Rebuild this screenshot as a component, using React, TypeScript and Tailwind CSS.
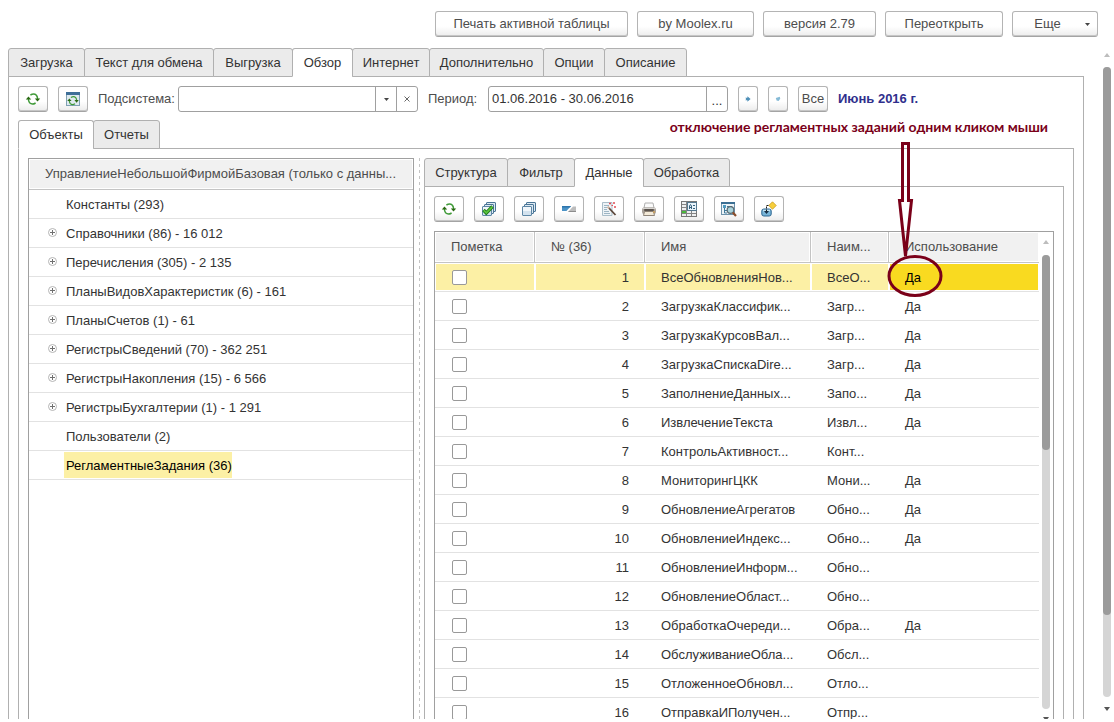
import type { ReactNode } from "react";

const BTN =
  "flex h-[26px] shrink-0 items-center justify-center rounded-[3px] border border-[#b4b4b4] border-b-[#a4a4a4] bg-linear-to-b from-white from-60% to-[#ececec] text-[#4d4d4d] shadow-[inset_0_-1px_0_#c6c6c6]";

type Tab = { label: string; width: string; active?: boolean };

const mainTabs: Tab[] = [
  { label: "Загрузка", width: "w-[77px]" },
  { label: "Текст для обмена", width: "w-[130px]" },
  { label: "Выгрузка", width: "w-20" },
  { label: "Обзор", width: "w-[61px]", active: true },
  { label: "Интернет", width: "w-[78px]" },
  { label: "Дополнительно", width: "w-[115px]" },
  { label: "Опции", width: "w-[62px]" },
  { label: "Описание", width: "w-[83px]" },
];

const objectTabs: Tab[] = [
  { label: "Объекты", width: "w-[76px]", active: true },
  { label: "Отчеты", width: "w-[67px]" },
];

const dataTabs: Tab[] = [
  { label: "Структура", width: "w-[84px]" },
  { label: "Фильтр", width: "w-[68px]" },
  { label: "Данные", width: "w-[70px]", active: true },
  { label: "Обработка", width: "w-[87px]" },
];

function Tabs({ tabs }: { tabs: Tab[] }) {
  return (
    <div role="tablist" className="relative z-10 -mb-px flex shrink-0">
      {tabs.map((t, i) => (
        <button
          key={t.label}
          role="tab"
          aria-selected={!!t.active}
          className={`${t.width} ${i > 0 ? "-ml-px" : ""} ${
            t.active ? "border-b-white bg-white" : "bg-[#ebebeb]"
          } h-[29px] shrink-0 rounded-t-[3px] border border-[#b0b0b0] text-center whitespace-nowrap text-[#333]`}
        >
          {t.label}
        </button>
      ))}
    </div>
  );
}

function Svg({ children }: { children: ReactNode }) {
  return (
    <svg width="16" height="16" viewBox="0 0 16 16" fill="none" aria-hidden="true">
      {children}
    </svg>
  );
}

function RefreshShape() {
  return (
    <>
      <path d="M5.4 4Q9 1.8 11.4 4.2Q12.5 5.6 12.6 8" stroke="#3f9a38" strokeWidth="1.5" />
      <path d="M10.6 12Q7 14.2 4.6 11.8Q3.5 10.4 3.4 8" stroke="#3f9a38" strokeWidth="1.5" />
      <path d="M9.8 7.4H15.2L12.5 10.6Z" fill="#2a6a12" />
      <path d="M0.8 8.6H6.2L3.5 5.4Z" fill="#2a6a12" />
    </>
  );
}

const RefreshIcon = () => (
  <Svg>
    <RefreshShape />
  </Svg>
);

const WindowRefreshIcon = () => (
  <Svg>
    <rect x="1.5" y="1.5" width="13" height="13" fill="#dfeaf0" stroke="#7fa0b3" />
    <rect x="1" y="1" width="14" height="3" fill="#3f6f98" />
    <g transform="translate(1.6 3.2) scale(0.8)">
      <RefreshShape />
    </g>
  </Svg>
);

const Sheets = () => (
  <>
    <rect x="5.5" y="1.5" width="9" height="9" rx="0.5" fill="#dce9f2" stroke="#4a7596" />
    <rect x="3.5" y="3.5" width="9" height="9" rx="0.5" fill="#dce9f2" stroke="#4a7596" />
    <rect x="1.5" y="5.5" width="9" height="9" rx="0.5" fill="#f1f6fa" stroke="#5d86a5" />
    <path d="M2 10H10V14H2Z" fill="#d3e2ee" />
  </>
);

const CheckAllIcon = () => (
  <Svg>
    <Sheets />
    <path d="M2.5 9L5.3 12L11.5 5.5" stroke="#1f7a1a" strokeWidth="3.4" />
    <path d="M2.8 9.3L5.3 11.8L11.2 5.9" stroke="#5cc43c" strokeWidth="1.8" />
  </Svg>
);

const UncheckAllIcon = () => (
  <Svg>
    <Sheets />
  </Svg>
);

const InvertIcon = () => (
  <Svg>
    <path d="M1 5H10L5.5 10H1Z" fill="#4b93c6" />
    <path d="M1 5H10L9 6.5H1Z" fill="#2f76ad" />
    <path d="M12 5.5H15V11H7Z" fill="#bdbdbd" />
    <path d="M7 11H15V10H8.2Z" fill="#8d8d8d" />
  </Svg>
);

const WandIcon = () => (
  <Svg>
    <path d="M1.5 1.5H11V14.5H1.5Z" fill="#eef3f6" stroke="#a9bdc9" />
    <path d="M3 4.5H8M3 6.5H6M3 8.5H6M3 10.5H8M3 12.5H9" stroke="#9db5c4" />
    <path d="M7 6L14.5 14" stroke="#5b463a" strokeWidth="1.8" />
    <path d="M6.6 5.6L8.3 7.4" stroke="#d8b9a5" strokeWidth="1.8" />
    <path d="M9 1.5V3.5M8 2.5H10M13 1V3M12 2H14M14 5V7M13 6H15M10.5 4.5H12" stroke="#e14d55" />
  </Svg>
);

const PrintIcon = () => (
  <Svg>
    <path d="M4 2H12L13 7H3Z" fill="#fbfbfb" stroke="#b0b0b0" />
    <rect x="1" y="6.5" width="14" height="6.5" rx="2" fill="#aaa39c" />
    <path d="M1.5 7.5H14.5" stroke="#d9d6d2" />
    <rect x="3" y="8" width="10" height="2" rx="1" fill="#5a534d" />
    <path d="M3.5 10.5H12.5L13.5 14.5H2.5Z" fill="#f3ead8" stroke="#8f8478" />
    <rect x="12" y="10.5" width="2" height="1" fill="#e3a23a" />
  </Svg>
);

const GridCardIcon = () => (
  <Svg>
    <rect x="0.5" y="0.5" width="15" height="15" fill="#eef0f1" stroke="#777" />
    <path d="M1 3.5H15M1 6.5H15M1 9.5H15M1 12.5H15M5.5 1V15M10.5 1V15" stroke="#858585" />
    <rect x="1" y="10" width="4" height="2" fill="#48b93b" />
    <rect x="6.5" y="1.5" width="9" height="8" fill="#e8f3fa" stroke="#55788f" />
    <path d="M8.5 8V5L9.5 3.5L10.5 5V8M8.5 6.5H10.5M12 4.5H14M12 7.5H14" stroke="#35617f" />
  </Svg>
);

const InspectIcon = () => (
  <Svg>
    <rect x="0.5" y="1.5" width="13" height="12" fill="#edf4f8" stroke="#6e93ab" />
    <path d="M0 2H14" stroke="#3c6f93" strokeWidth="2" />
    <rect x="2" y="4" width="3" height="3" fill="#4f9bc0" />
    <path d="M3.5 7V12M3.5 9.5H6M3.5 12H6M6 5.5H11" stroke="#3f7899" />
    <circle cx="9.5" cy="9" r="3.3" fill="#a8d3dc" stroke="#5a6a72" strokeWidth="1.2" />
    <path d="M11.8 11.5L15 15" stroke="#8a4e2c" strokeWidth="2.2" />
  </Svg>
);

const ExportIcon = () => (
  <Svg>
    <path d="M11.5 0.8L15.2 4.5L11.5 8.2L7.8 4.5Z" fill="#f7cf3c" stroke="#c79a1c" strokeWidth="0.8" />
    <rect x="0.8" y="8" width="9.4" height="7" rx="2" fill="#79b5d8" stroke="#2b6590" />
    <path d="M2 9.5H9" stroke="#c4e2f1" strokeWidth="1.5" />
    <path d="M7.5 4.5H5.5V11" stroke="#1d1d1d" strokeDasharray="2 1" />
    <path d="M3 10H8L5.5 13Z" fill="#172f45" />
  </Svg>
);

const StepIcon = ({ forward }: { forward?: boolean }) => (
  <svg width="6" height="6" viewBox="0 0 6 6" aria-hidden="true">
    {forward ? (
      <path d="M0.3 1.8H2.4V0.2L5.6 3L2.4 5.8V4.2H0.3L1.2 3Z" fill="#4f90b8" />
    ) : (
      <path d="M0.8 2L4.8 0.8L5.2 2.8L3.6 5L1.6 4.6Z" fill="#85bad6" />
    )}
  </svg>
);

const Down = () => (
  <svg width="5" height="3" viewBox="0 0 5 3" aria-hidden="true">
    <path d="M0 0H5L2.5 3Z" fill="#444" />
  </svg>
);

function ArrowHead({ up }: { up?: boolean }) {
  return (
    <svg width="6" height="4" viewBox="0 0 6 4" className="shrink-0" aria-hidden="true">
      {up ? <path d="M0 4L3 0L6 4Z" fill="#bdbdbd" /> : <path d="M0 0H6L3 4Z" fill="#555" />}
    </svg>
  );
}

const tree = [
  { label: "Константы (293)" },
  { label: "Справочники (86) - 16 012", plus: true },
  { label: "Перечисления (305) - 2 135", plus: true },
  { label: "ПланыВидовХарактеристик (6) - 161", plus: true },
  { label: "ПланыСчетов (1) - 61", plus: true },
  { label: "РегистрыСведений (70) - 362 251", plus: true },
  { label: "РегистрыНакопления (15) - 6 566", plus: true },
  { label: "РегистрыБухгалтерии (1) - 1 291", plus: true },
  { label: "Пользователи (2)" },
  { label: "РегламентныеЗадания (36)", selected: true },
];

const rows: [string, string, boolean][] = [
  ["ВсеОбновленияНов...", "ВсеО...", true],
  ["ЗагрузкаКлассифик...", "Загр...", true],
  ["ЗагрузкаКурсовВал...", "Загр...", true],
  ["ЗагрузкаСпискаDire...", "Загр...", true],
  ["ЗаполнениеДанных...", "Запо...", true],
  ["ИзвлечениеТекста", "Извл...", true],
  ["КонтрольАктивност...", "Конт...", false],
  ["МониторингЦКК", "Мони...", true],
  ["ОбновлениеАгрегатов", "Обно...", true],
  ["ОбновлениеИндекс...", "Обно...", true],
  ["ОбновлениеИнформ...", "Обно...", false],
  ["ОбновлениеОбласт...", "Обно...", false],
  ["ОбработкаОчереди...", "Обра...", true],
  ["ОбслуживаниеОбла...", "Обсл...", false],
  ["ОтложенноеОбновл...", "Отло...", false],
  ["ОтправкаИПолучен...", "Отпр...", false],
];

const tools: [string, () => ReactNode][] = [
  ["Обновить", RefreshIcon],
  ["Пометить все", CheckAllIcon],
  ["Снять пометки", UncheckAllIcon],
  ["Инвертировать", InvertIcon],
  ["Мастер", WandIcon],
  ["Печать", PrintIcon],
  ["Карточка", GridCardIcon],
  ["Найти", InspectIcon],
  ["Выгрузить", ExportIcon],
];

function ObjectTree() {
  return (
    <div className="w-[386px] shrink-0 overflow-hidden border border-b-0 border-[#a0a0a0]">
      <div className="h-[31px] truncate border-b border-[#c4c4c4] bg-[#f1f1f1] pl-4 leading-[30px] text-[#4d4d4d] shadow-[inset_0_0_0_1px_#fff]">
        УправлениеНебольшойФирмойБазовая (только с данны...
      </div>
      <ul role="tree">
        {tree.map((n) => (
          <li
            key={n.label}
            role="treeitem"
            aria-selected={!!n.selected}
            className="flex h-[29px] items-center border-b border-[#e2e2e2]"
          >
            <span className="flex w-[35px] shrink-0 justify-end pr-[7px] pb-px">
              {n.plus && (
                <svg width="9" height="9" viewBox="0 0 9 9" fill="none" aria-hidden="true">
                  <circle cx="4.5" cy="4.5" r="4" stroke="#b5b5b5" />
                  <path d="M2 4.5H7M4.5 2V7" stroke="#707070" />
                </svg>
              )}
            </span>
            <span
              className={`h-[26px] pl-0.5 leading-7 ${n.selected ? "bg-[#fcf0a5] text-black" : ""}`}
            >
              {n.label}
            </span>
          </li>
        ))}
      </ul>
    </div>
  );
}

const TH =
  "border-r border-[#c4c4c4] pl-4 text-left font-normal text-[#4d4d4d] shadow-[inset_0_0_0_1px_#fff] last:border-r-0";

function JobsTable() {
  return (
    <div className="mt-[9px] flex min-h-0 flex-1 overflow-hidden border border-b-0 border-[#a0a0a0]">
      <div className="min-w-0 flex-1 overflow-hidden">
        <table className="w-full table-fixed border-separate border-spacing-0">
          <colgroup>
            <col className="w-[100px]" />
            <col className="w-[110px]" />
            <col className="w-[166px]" />
            <col className="w-[78px]" />
            <col />
          </colgroup>
          <thead>
            <tr className="h-[31px] bg-[#f1f1f1] *:border-b">
              <th className={TH}>Пометка</th>
              <th className={TH}>№ (36)</th>
              <th className={TH}>Имя</th>
              <th className={TH}>Наим...</th>
              <th className={TH}>Использование</th>
            </tr>
          </thead>
          <tbody>
            {rows.map(([name, title, used], i) => (
              <tr
                key={name}
                className={`h-[29px] *:border-b *:border-[#e2e2e2] ${
                  i === 0 ? "bg-[#fcf0a5] *:shadow-[inset_0_0_0_1px_#fff]" : ""
                }`}
              >
                <td className="pl-[17px]">
                  <input
                    type="checkbox"
                    aria-label={name}
                    className="block size-[15px] appearance-none rounded-[2px] border border-[#999] bg-white"
                  />
                </td>
                <td className="pt-0.5 pr-4 text-right">{i + 1}</td>
                <td className="pt-0.5 pl-4 whitespace-nowrap">{name}</td>
                <td className="pt-0.5 pl-4 whitespace-nowrap">{title}</td>
                <td className={`pt-0.5 pl-4 ${i === 0 ? "bg-[#f9da20] text-black" : ""}`}>
                  {used ? "Да" : ""}
                </td>
              </tr>
            ))}
          </tbody>
        </table>
      </div>
      <div className="flex w-3.5 shrink-0 flex-col items-center pt-2">
        <ArrowHead up />
        <div className="mt-[11px] min-h-0 w-2 flex-1 rounded-full bg-[#d5d5d5]">
          <div className="h-[43%] rounded-full bg-[#9b9b9b]" />
        </div>
        <div className="mt-2 h-0.5 overflow-hidden">
          <ArrowHead />
        </div>
      </div>
    </div>
  );
}

export default function App() {
  return (
    <div className="relative flex h-screen flex-col overflow-hidden bg-white pt-[11px] pb-[3px] font-['Liberation_Sans',Arial,sans-serif] text-[13px] leading-4 text-[#333]">
      <div className="flex shrink-0 justify-end gap-[9px] pr-4">
        <button className={`${BTN} w-[193px]`}>Печать активной таблицы</button>
        <button className={`${BTN} w-[117px]`}>by Moolex.ru</button>
        <button className={`${BTN} w-[113px]`}>версия 2.79</button>
        <button className={`${BTN} w-[118px]`}>Переоткрыть</button>
        <button className={`${BTN} w-[86px] gap-6 pl-3.5`}>
          Еще
          <Down />
        </button>
      </div>

      <div className="mt-[11px] flex min-h-0 flex-1 pl-2">
        <div className="flex min-w-0 flex-1 flex-col">
          <Tabs tabs={mainTabs} />
          <div className="flex min-h-0 flex-1 flex-col border border-b-0 border-[#b0b0b0] px-[9px] pt-[9px]">
            <div className="flex shrink-0 items-center">
              <button aria-label="Обновить" className={`${BTN} w-[30px]`}>
                <RefreshIcon />
              </button>
              <button aria-label="Обновить форму" className={`${BTN} ml-2.5 w-[30px]`}>
                <WindowRefreshIcon />
              </button>
              <label htmlFor="subsystem" className="ml-2.5 w-20 text-[#4d4d4d]">
                Подсистема:
              </label>
              <div className="flex h-[26px] w-60 rounded-[3px] border border-[#a0a0a0]">
                <input id="subsystem" className="min-w-0 flex-1 px-1 outline-none" />
                <button
                  aria-label="Выбрать"
                  className="flex w-[21px] items-center justify-center border-l border-[#a0a0a0]"
                >
                  <Down />
                </button>
                <button
                  aria-label="Очистить"
                  className="flex w-[21px] items-center justify-center border-l border-[#a0a0a0]"
                >
                  <svg width="6" height="6" viewBox="0 0 6 6" aria-hidden="true">
                    <path d="M0.5 0.5L5.5 5.5M5.5 0.5L0.5 5.5" stroke="#555" strokeWidth="0.9" />
                  </svg>
                </button>
              </div>
              <label htmlFor="period" className="ml-2.5 w-[60px] text-[#4d4d4d]">
                Период:
              </label>
              <div className="flex h-[26px] w-60 rounded-[3px] border border-[#a0a0a0]">
                <input
                  id="period"
                  defaultValue="01.06.2016 - 30.06.2016"
                  className="min-w-0 flex-1 px-[3px] outline-none"
                />
                <button
                  aria-label="Выбрать период"
                  className="w-[21px] border-l border-[#a0a0a0] pt-1"
                >
                  ...
                </button>
              </div>
              <button aria-label="Предыдущий период" className={`${BTN} ml-2.5 w-5`}>
                <StepIcon forward />
              </button>
              <button aria-label="Следующий период" className={`${BTN} ml-2.5 w-5`}>
                <StepIcon />
              </button>
              <button className={`${BTN} ml-2.5 w-[30px]`}>Все</button>
              <span className="ml-2.5 font-bold whitespace-nowrap text-[#2f2f8c]">Июнь 2016 г.</span>
            </div>

            <div className="mt-2 flex min-h-0 flex-1 flex-col">
              <Tabs tabs={objectTabs} />
              <div className="flex min-h-0 flex-1 border border-b-0 border-[#b0b0b0] px-[9px] pt-[9px]">
                <ObjectTree />
                <div className="mr-1 ml-[5px] w-px shrink-0 bg-[repeating-linear-gradient(to_bottom,#c4c4c4_0,#c4c4c4_3px,transparent_3px,transparent_6px)]" />
                <div className="flex min-w-0 flex-1 flex-col">
                  <Tabs tabs={dataTabs} />
                  <div className="flex min-h-0 flex-1 flex-col border border-b-0 border-[#b0b0b0] px-[9px] pt-[9px]">
                    <div className="flex shrink-0 gap-2.5">
                      {tools.map(([label, Icon]) => (
                        <button key={label} aria-label={label} className={`${BTN} w-[30px]`}>
                          <Icon />
                        </button>
                      ))}
                    </div>
                    <JobsTable />
                  </div>
                </div>
              </div>
            </div>
          </div>
        </div>
        <div className="flex w-[30px] shrink-0 flex-col items-center pt-[5px] pb-2 pl-4">
          <ArrowHead up />
          <div className="mt-[10px] mb-[10px] min-h-0 w-2 flex-1 rounded-full bg-[#d5d5d5]">
            <div className="h-[87%] rounded-full bg-[#9b9b9b]" />
          </div>
          <ArrowHead />
        </div>
      </div>

      <p className="absolute top-[118px] right-[66px] z-20 font-[Lato,'Open_Sans',sans-serif] text-[14px] leading-[18px] font-bold whitespace-nowrap text-[#7a0019]">
        отключение регламентных заданий одним кликом мыши
      </p>
      <svg
        className="pointer-events-none absolute top-[140px] right-[168px] z-20"
        width="60"
        height="160"
        viewBox="886 140 60 160"
        fill="none"
        stroke="#7a0019"
        aria-hidden="true"
      >
        <path d="M902.5 143.5H908.5V200.5H911.5L905.5 256L899.5 200.5H902.5Z" strokeWidth="3" />
        <ellipse cx="915" cy="276" rx="26" ry="19.5" strokeWidth="3" />
      </svg>
    </div>
  );
}
